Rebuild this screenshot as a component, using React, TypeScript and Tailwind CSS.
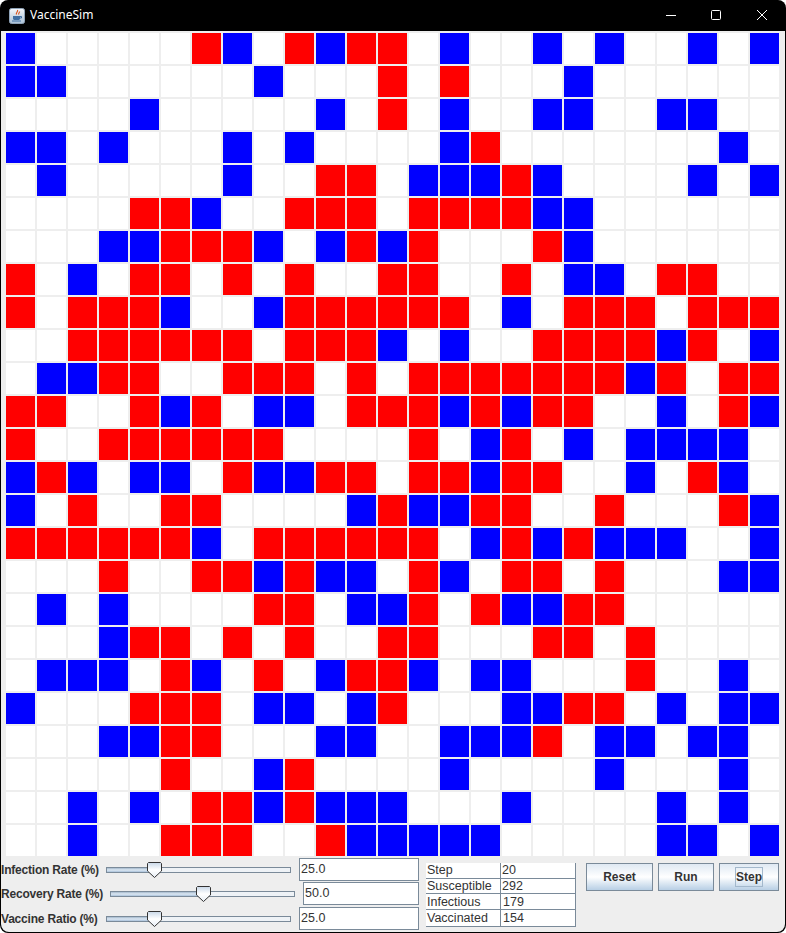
const ROWS = [
  "B.....RB.RBRR.B..B.B..B.B",
  "BB......B...R.R...B......",
  "....B.....B.R.B..BB..BB..",
  "BB.B...B.B....BR.......B.",
  ".B.....B..RR.BBBRB....B.B",
  "....RRB..RRR.RRRRBB......",
  "...BBRRRB.BRBR...RB......",
  "R.B.RR.R.R..RR..R.BB.RR..",
  "R.RRRB..BRRRRRR.B.RRR.RRR",
  "..RRRRRR.RRRB.B..RRRRBR.B",
  ".BBRR..RRR.R.RRRRRRRBR.RR",
  "RR..RBR.BB.RRRBRBRR..B.RB",
  "R..RRRRRR....R.BR.B.BBBB.",
  "BRB.BB.RBBRR.RRBRR..B.RB.",
  "B.R..RR....BRBBRR..R...RB",
  "RRRRRRB.RRRRRR.BRBRBBB..B",
  "...R..RRBRBB.RB.RR.R...BB",
  ".B.B....RR.BBR.RBBRR.....",
  "...BRR.R.R..RR...RR.R....",
  ".BBB.RB.R.BRRB.BB...R..B.",
  "B...RRR.BB.BR...BBRR.B.BB",
  "...BBRR...BB..BBBR.BB.BB.",
  ".....R..BR....B....B...B.",
  "..B.B.RRBRBBB...B....B.B.",
  "..B..RRR..RBBBBB.....BB.B",
];

const CELL: Record<string, string> = {
  ".": "bg-white",
  R: "bg-[#ff0000]",
  B: "bg-[#0000ff]",
};

const STATS = [
  { name: "Step", num: "20", row: "h-[16px] leading-[15px]", pad: "pl-[1px]" },
  { name: "Susceptible", num: "292", row: "h-[15px] leading-[15px]", pad: "pl-[1px]" },
  { name: "Infectious", num: "179", row: "h-[16px] leading-[17px]", pad: "pl-[2px]" },
  { name: "Vaccinated", num: "154", row: "h-[16px] leading-[17px]", pad: "pl-[2px]" },
];

function JavaIcon() {
  return (
    <svg width="16" height="16" viewBox="0 0 16 16" className="shrink-0">
      <defs>
        <linearGradient id="tile" x1="0" y1="0" x2="0" y2="1">
          <stop offset="0" stopColor="#f4f7fa" />
          <stop offset="1" stopColor="#a9c0d6" />
        </linearGradient>
      </defs>
      <rect x="0.5" y="0.5" width="15" height="15" rx="2" fill="url(#tile)" stroke="#8fa3b8" />
      <path d="M8.500 2c1 1.500-2 2.500-1 4.500M10.500 3.500c.5 1-1.500 1.700-.7 3" fill="none" stroke="#d9541e" strokeWidth="1.2" />
      <path d="M4 8h7v2.500c0 1-1 1.500-2 1.500H6c-1 0-2-.5-2-1.500z" fill="#3f6fa3" />
      <path d="M11 8.500h1.500v1.500H11" fill="none" stroke="#3f6fa3" />
      <path d="M3 13h9" stroke="#3f6fa3" strokeWidth="1" />
    </svg>
  );
}

function Slider({ label, percent, value, labelWidth, className }: { label: string; percent: number; value: string; labelWidth: string; className?: string }) {
  const thumbLeft = Math.round(percent * 1.8 - 4);
  return (
    <div className={`flex items-center h-[23px] ${className ?? ""}`}>
      <span className={`${labelWidth} shrink-0 font-bold text-[12px] tracking-[-0.2px] leading-none text-[#333333] whitespace-nowrap`}>{label}</span>
      <div className="relative h-[16px] w-[185px] shrink-0 flex items-center">
        <div className="w-full h-[6px] border border-[#7a8a99] bg-[#eef2f6] flex">
          <div
            className="h-full bg-gradient-to-b from-[#a3b8cc] via-[#dde8f3] to-[#a9c1da]"
            style={{ width: thumbLeft + 4 }}
          />
        </div>
        <svg width="15" height="16" viewBox="0 0 15 16" className="absolute top-0" style={{ left: thumbLeft }}>
          <defs>
            <linearGradient id={`thumb-${label[0]}`} x1="0" y1="0" x2="0" y2="1">
              <stop offset="0" stopColor="#c9d8e8" />
              <stop offset="0.5" stopColor="#ffffff" />
              <stop offset="1" stopColor="#e6edf5" />
            </linearGradient>
          </defs>
          <path d="M1.500 .5h12l1 1v7.500l-7 6.500-7-6.500V1.500z" fill={`url(#thumb-${label[0]})`} stroke="#333333" />
        </svg>
      </div>
      <div className="ml-[8px] flex-1 h-full bg-white border border-[#7a8a99] text-[12.5px] text-[#333333] leading-[21px] pl-[1px]">{value}</div>
    </div>
  );
}

function Btn({ label, width, focused }: { label: string; width: string; focused?: boolean }) {
  return (
    <button className={`${width} h-[28px] border border-[#7a8a99] bg-gradient-to-b from-[#dfe9f3] via-[#ffffff] to-[#b8cfe5] flex items-center justify-center font-bold text-[12px] text-[#333333]`}>
      <span className={focused ? "border border-[#a3b8cc] w-[28px] h-[20px] flex items-center justify-center" : ""}>{label}</span>
    </button>
  );
}

export default function App() {
  return (
    <div className="w-[786px] h-[933px] bg-white overflow-hidden font-['Liberation_Sans',sans-serif]">
      <div className="w-full h-full bg-black rounded-lg overflow-hidden flex flex-col">
        <div className="h-[31px] shrink-0 flex items-center pl-[9px] text-white">
          <JavaIcon />
          <span className="ml-[5px] text-[12px] font-['Noto_Sans',sans-serif] mb-[1px]">VaccineSim</span>
          <div className="ml-auto mr-[1px] flex items-center">
            <svg width="46" height="31" viewBox="0 0 46 31"><path d="M19 15.500h10" stroke="#fff" strokeWidth="1" /></svg>
            <svg width="46" height="31" viewBox="0 0 46 31"><rect x="18.500" y="10.500" width="9" height="9" rx="1" fill="none" stroke="#fff" /></svg>
            <svg width="46" height="31" viewBox="0 0 46 31"><path d="M18 10l10 10M28 10l-10 10" stroke="#fff" strokeWidth="1" /></svg>
          </div>
        </div>
        <div className="flex-1 mx-[1px] mb-[1px] bg-[#eeeeee] rounded-b-lg flex flex-col">
          <div className="pl-[5px] pt-[2px] grid grid-cols-[repeat(25,29px)] auto-rows-[31px] gap-[2px]">
            {ROWS.flatMap((row, y) =>
              row.split("").map((c, x) => <div key={`${y}-${x}`} className={CELL[c]} />)
            )}
          </div>
          <div className="flex items-start">
            <div className="w-[418px] shrink-0 pt-[2px] flex flex-col gap-[1px]">
              <Slider label="Infection Rate (%)" percent={25} value="25.0" labelWidth="w-[105px]" />
              <Slider label="Recovery Rate (%)" percent={50} value="50.0" labelWidth="w-[109px]" />
              <Slider label="Vaccine Ratio (%)" percent={25} value="25.0" labelWidth="w-[105px]" className="mt-[1px]" />
            </div>
            <div className="ml-[7px] mt-[7px] w-[150px] bg-white border-r border-b border-[#7a8a99] text-[12.5px] text-[#333333]">
              {STATS.map((s, i) => (
                <div key={s.name} className={`flex ${s.row} ${i < 3 ? "border-b border-[#7a8a99]" : ""}`}>
                  <div className="w-[75px] pl-[1px] border-r border-[#7a8a99]">{s.name}</div>
                  <div className={s.pad}>{s.num}</div>
                </div>
              ))}
            </div>
            <div className="ml-[10px] mt-[7px] flex gap-[5px]">
              <Btn label="Reset" width="w-[67px]" />
              <Btn label="Run" width="w-[56px]" />
              <Btn label="Step" width="w-[60px]" focused />
            </div>
          </div>
        </div>
      </div>
    </div>
  );
}
